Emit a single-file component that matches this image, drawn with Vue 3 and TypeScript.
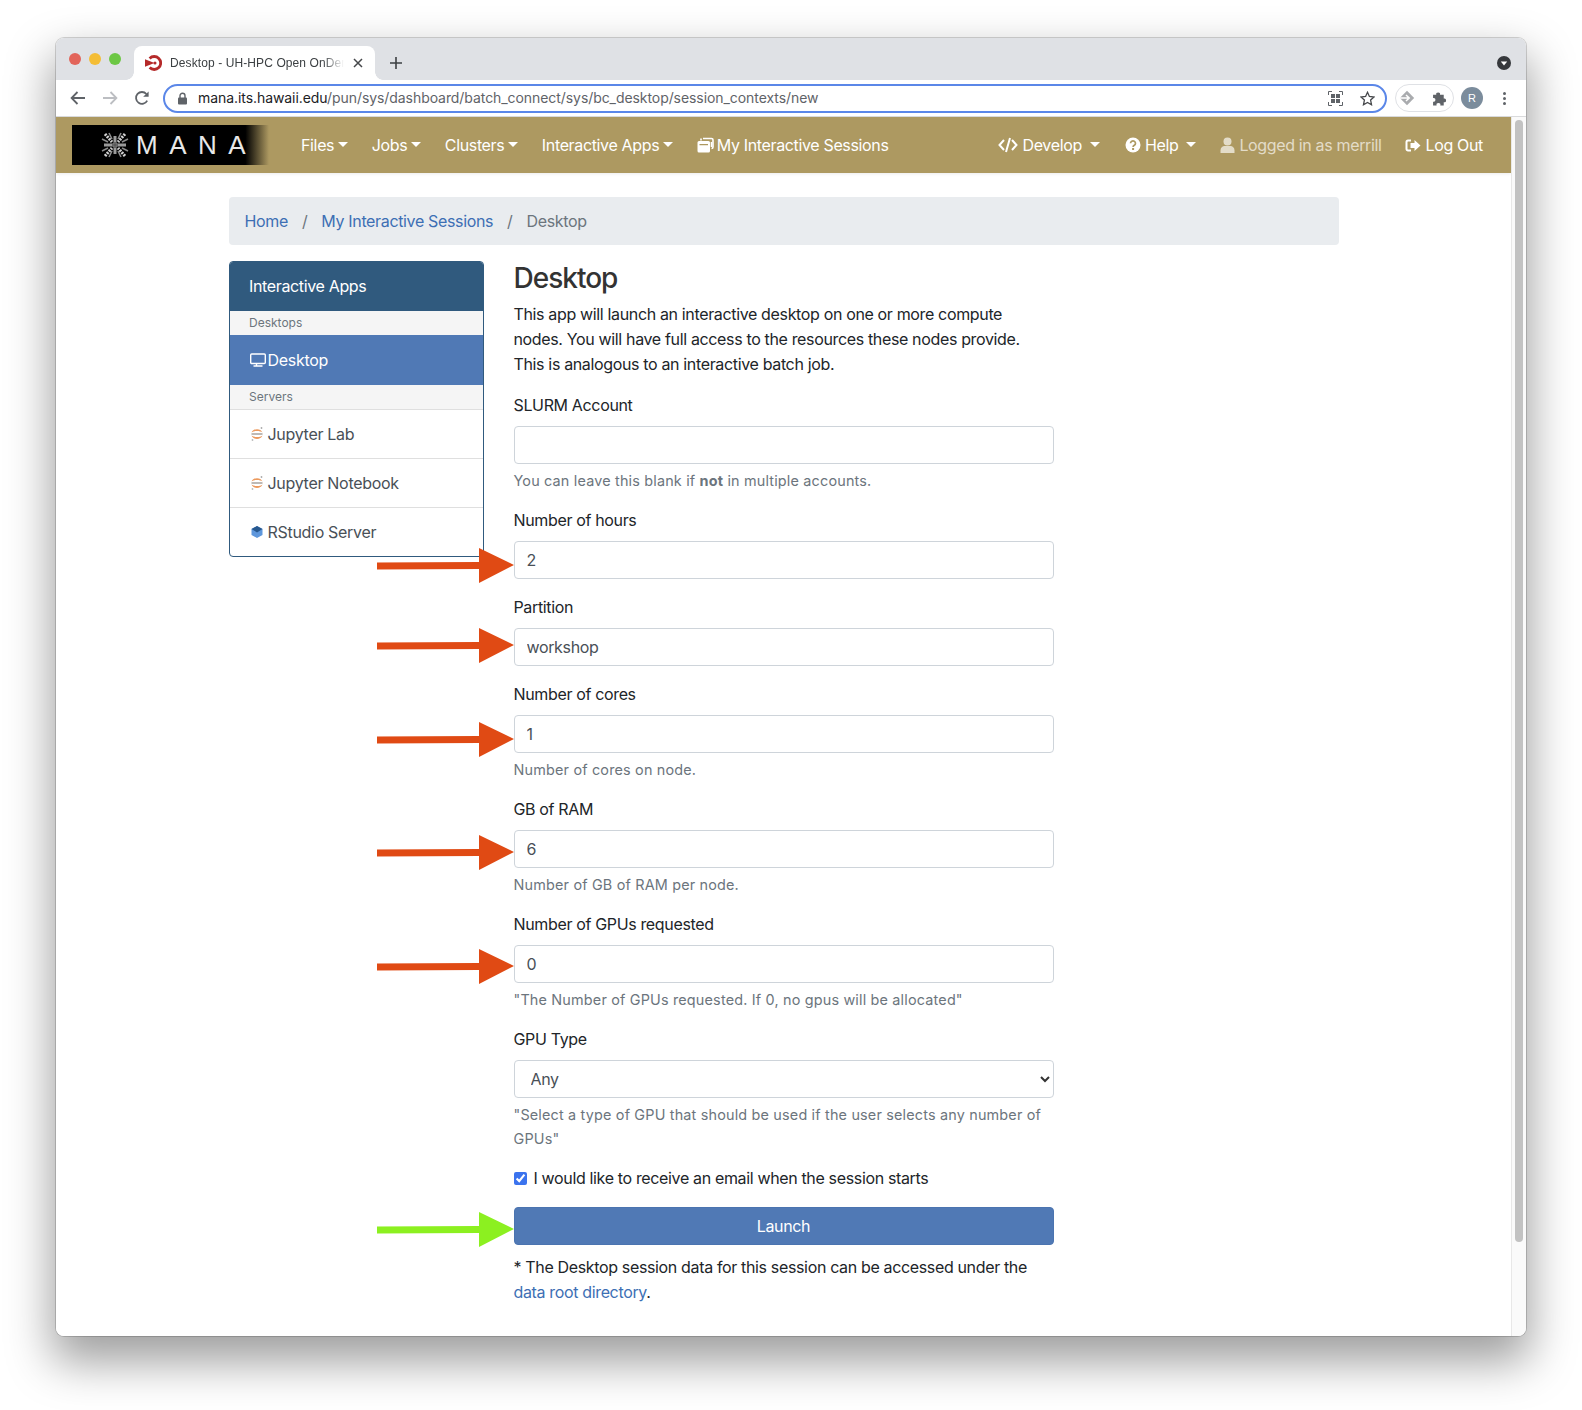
<script setup lang="ts">
interface Field { label: string; value: string; help?: string }
const fields: Field[] = [
  { label: 'Number of hours', value: '2' },
  { label: 'Partition', value: 'workshop' },
  { label: 'Number of cores', value: '1', help: 'Number of cores on node.' },
  { label: 'GB of RAM', value: '6', help: 'Number of GB of RAM per node.' },
  { label: 'Number of GPUs requested', value: '0', help: '"The Number of GPUs requested. If 0, no gpus will be allocated"' },
]
const arrows = [
  { top: 548, color: '#e04a14' },
  { top: 628, color: '#e04a14' },
  { top: 722, color: '#e04a14' },
  { top: 835, color: '#e04a14' },
  { top: 949, color: '#e04a14' },
  { top: 1212, color: '#8cf020' },
]
</script>

<template>
  <div class="window">
    <div class="tabstrip">
      <div class="lights"><i class="l r"></i><i class="l y"></i><i class="l g"></i></div>
      <div class="tab">
        <svg class="fav" width="17" height="16" viewBox="0 0 17 16"><path d="M4.600 3.400A6.500 6.500 0 1 1 4.600 12.600" fill="none" stroke="#b52a2a" stroke-width="2.800"/><path d="M0 4.200 L9.500 8 L0 11.800Z" fill="#b52a2a"/><circle cx="10" cy="8" r="1.500" fill="#b52a2a"/></svg>
        <span class="tab-title">Desktop - UH-HPC Open OnDemand</span>
        <svg class="tab-x" width="10" height="10" viewBox="0 0 10 10"><path d="M1 1l8 8M9 1l-8 8" stroke="#45474a" stroke-width="1.500"/></svg>
      </div>
      <svg class="plus" width="12" height="12" viewBox="0 0 12 12"><path d="M6 0v12M0 6h12" stroke="#3c4043" stroke-width="1.600"/></svg>
      <span class="spacer"></span>
      <svg class="strip-menu" width="14" height="14" viewBox="0 0 14 14"><circle cx="7" cy="7" r="7" fill="#36383c"/><path d="M3.800 5.400h6.400L7 9.400Z" fill="#fff"/></svg>
    </div>

    <div class="toolbar">
      <svg class="tb back" width="16" height="14" viewBox="0 0 16 14"><path d="M15 7H2M7.500 1 1.600 7l5.900 6" fill="none" stroke="#5f6368" stroke-width="1.800"/></svg>
      <svg class="tb fwd" width="16" height="14" viewBox="0 0 16 14"><path d="M1 7h13M8.500 1l5.900 6-5.900 6" fill="none" stroke="#bcbec2" stroke-width="1.800"/></svg>
      <svg class="tb reload" width="16" height="16" viewBox="0 0 16 16"><path d="M13.200 10.600A5.900 5.900 0 1 1 12.400 4" fill="none" stroke="#5f6368" stroke-width="1.800"/><path d="M14.600 1.400v5.400H9.200Z" fill="#5f6368"/></svg>
      <div class="omnibox">
        <svg width="11" height="13" viewBox="0 0 11 13"><path d="M3 6V3.800a2.500 2.500 0 0 1 5 0V6" fill="none" stroke="#5f6368" stroke-width="1.400"/><rect x="1" y="5.500" width="9" height="7" rx="1" fill="#5f6368"/></svg>
        <span class="url"><b>mana.its.hawaii.edu</b>/pun/sys/dashboard/batch_connect/sys/bc_desktop/session_contexts/new</span>
        <svg class="qr" width="15" height="15" viewBox="0 0 15 15"><path d="M.5 4V.5H4M11 .5h3.500V4M14.500 11v3.500H11M4 14.500H.5V11" fill="none" stroke="#5f6368"/><rect x="3" y="3" width="4" height="4" fill="#5f6368"/><rect x="8" y="3" width="4" height="4" fill="#5f6368"/><rect x="3" y="8" width="4" height="4" fill="#5f6368"/><rect x="8" y="8" width="4" height="4" fill="#5f6368"/></svg>
        <svg class="star" width="15" height="15" viewBox="0 0 15 15"><path d="M7.500 1.300 9.400 5.500 14 6l-3.400 3.100.9 4.600-4-2.300-4 2.300.9-4.600L1 6l4.600-.5Z" fill="none" stroke="#45474a" stroke-width="1.300"/></svg>
      </div>
      <div class="ext">
        <svg width="16" height="16" viewBox="0 0 16 16"><path d="M8 .8 15.200 8 8 15.200.8 8Z" fill="#a9abae"/><path d="M1 8h8M7 5l3.200 3L7 11" fill="none" stroke="#fff" stroke-width="1.500"/></svg>
        <svg width="16" height="16" viewBox="0 0 15 15"><path d="M1 4.500h3a1.800 1.800 0 1 1 3.500 0h3.500V8a1.800 1.800 0 1 1 0 3.500V14.500H7.800a1.800 1.800 0 1 0-3.500 0H1V11a1.800 1.800 0 1 0 0-3.500Z" fill="#5f6368"/></svg>
      </div>
      <span class="avatar">R</span>
      <span class="dots"><i></i><i></i><i></i></span>
    </div>

    <div class="viewport">
      <div class="page">
        <nav class="navbar">
          <div class="logo">
            <svg class="mark" width="32" height="30" viewBox="0 0 32 30">
              <g fill="none">
                <path d="M16 6v18M5 15h22" stroke="#9a9a9a" stroke-width="3"/>
                <path d="M13 15h6M16 12v6" stroke="#555" stroke-width="1.500"/>
                <path d="M6 4l7 8M26 4l-7 8M6 26l7-8M26 26l-7-8" stroke="#cfcfcf" stroke-width="3" stroke-dasharray="2 1"/>
                <path d="M10 3l3 6M22 3l-3 6M10 27l3-6M22 27l-3-6M3 9l6 3M29 9l-6 3M3 21l6-3M29 21l-6-3" stroke="#8a8a8a" stroke-width="1.600"/>
              </g>
            </svg>
            <span class="logo-text">MANA</span>
          </div>
          <a class="nl caret tight">Files</a>
          <a class="nl caret tight">Jobs</a>
          <a class="nl caret tight">Clusters</a>
          <a class="nl caret tight">Interactive Apps</a>
          <a class="nl">
            <svg class="ni win" width="17" height="16" viewBox="0 0 17 16"><path d="M6 1.500h8.500a1.500 1.500 0 0 1 1.500 1.500v7a1.500 1.500 0 0 1-1.500 1.500" fill="none" stroke="#fff" stroke-width="1.600"/><path d="M4 1.500v2M14.500 10V5" stroke="#fff" stroke-width="1.600"/><path d="M2 4h9.500A1.500 1.500 0 0 1 13 5.500v8.500a1.500 1.500 0 0 1-1.500 1.500H2A1.500 1.500 0 0 1 .5 14V5.500A1.500 1.500 0 0 1 2 4Zm.5 3v1.200h8.500V7Z" fill="#fff" fill-rule="evenodd"/></svg>
            My Interactive Sessions
          </a>
          <span class="spacer"></span>
          <a class="nl caret wide">
            <svg class="ni code" width="20" height="16" viewBox="0 0 20 16"><path d="M6 3 1.500 8 6 13M14 3l4.500 5L14 13M12 1 8 15" fill="none" stroke="#fff" stroke-width="2"/></svg>
            Develop
          </a>
          <a class="nl caret wide help">
            <svg class="ni" width="16" height="16" viewBox="0 0 16 16"><circle cx="8" cy="8" r="7.500" fill="#fff"/><path d="M5.500 6.200a2.500 2.400 0 1 1 3.800 2.100c-.8.500-1.200.8-1.200 1.700" fill="none" stroke="#ad9961" stroke-width="1.700"/><rect x="7.100" y="11" width="2" height="2" fill="#ad9961"/></svg>
            Help
          </a>
          <a class="nl muted">
            <svg class="ni" width="15" height="16" viewBox="0 0 15 16"><circle cx="7.500" cy="4.500" r="4" fill="#e3dcc8"/><path d="M.5 16v-2.500c0-3 2-4.500 4-4.500h6c2 0 4 1.500 4 4.500V16Z" fill="#e3dcc8"/></svg>
            Logged in as merrill
          </a>
          <a class="nl end">
            <svg class="ni out" width="16" height="15" viewBox="0 0 16 15"><path d="M6 2.500H3a1.500 1.500 0 0 0-1.500 1.500v7A1.500 1.500 0 0 0 3 12.500h3" fill="none" stroke="#fff" stroke-width="2"/><path d="M15.500 7.500 9.500 2v3H5.500v5h4v3Z" fill="#fff"/></svg>
            Log Out
          </a>
        </nav>

        <main class="container">
          <ol class="crumbs">
            <li><a>Home</a></li>
            <li class="sep">/</li>
            <li><a>My Interactive Sessions</a></li>
            <li class="sep">/</li>
            <li class="cur">Desktop</li>
          </ol>

          <div class="columns">
            <aside class="side">
              <div class="side-head">Interactive Apps</div>
              <div class="side-group">Desktops</div>
              <a class="side-item active">
                <svg class="si" width="16" height="14" viewBox="0 0 16 14"><rect x=".7" y="1" width="14.600" height="9.500" rx="1" fill="none" stroke="#fff" stroke-width="1.400"/><path d="M6.500 11v1.500M3.500 13h9" stroke="#fff" stroke-width="1.400"/></svg>Desktop
              </a>
              <div class="side-group">Servers</div>
              <a class="side-item">
                <svg class="si small" width="14" height="16" viewBox="0 0 14 16"><path d="M1.500 6.500C3 2 11 2 12.500 6.500 10 4.500 4 4.500 1.500 6.500Z" fill="#ec9a5e"/><path d="M1.500 9.500C3 14 11 14 12.500 9.500 10 11.500 4 11.500 1.500 9.500Z" fill="#ec9a5e"/><rect x="1.500" y="7" width="11" height="2" fill="#bdb9b5"/><circle cx="11.500" cy="2" r=".9" fill="#aaa"/><circle cx="2.500" cy="14" r=".9" fill="#bbb"/></svg>Jupyter Lab
              </a>
              <a class="side-item">
                <svg class="si small" width="14" height="16" viewBox="0 0 14 16"><path d="M1.500 6.500C3 2 11 2 12.500 6.500 10 4.500 4 4.500 1.500 6.500Z" fill="#ec9a5e"/><path d="M1.500 9.500C3 14 11 14 12.500 9.500 10 11.500 4 11.500 1.500 9.500Z" fill="#ec9a5e"/><rect x="1.500" y="7" width="11" height="2" fill="#bdb9b5"/><circle cx="11.500" cy="2" r=".9" fill="#aaa"/><circle cx="2.500" cy="14" r=".9" fill="#bbb"/></svg>Jupyter Notebook
              </a>
              <a class="side-item last">
                <svg class="si small" width="14" height="14" viewBox="0 0 14 14"><path d="M7 1l5.500 3v6L7 13 1.500 10V4Z" fill="#5e97dc"/><path d="M7 1l5.500 3L7 7.500 1.500 4Z" fill="#27588f"/></svg>RStudio Server
              </a>
            </aside>

            <section class="form">
              <h3>Desktop</h3>
              <p class="intro">This app will launch an interactive desktop on one or more compute nodes. You will have full access to the resources these nodes provide. This is analogous to an interactive batch job.</p>

              <div class="fg">
                <label>SLURM Account</label>
                <input class="ctl" type="text" value="" />
                <small>You can leave this blank if <strong>not</strong> in multiple accounts.</small>
              </div>
              <div class="fg" v-for="f in fields" :key="f.label">
                <label>{{ f.label }}</label>
                <input class="ctl" type="text" :value="f.value" />
                <small v-if="f.help">{{ f.help }}</small>
              </div>
              <div class="fg">
                <label>GPU Type</label>
                <div class="sel-wrap">
                  <select class="ctl sel"><option>Any</option></select>
                  <svg class="chev" width="10" height="7" viewBox="0 0 10 7"><path d="M1 1l4 4 4-4" fill="none" stroke="#333" stroke-width="2"/></svg>
                </div>
                <small>"Select a type of GPU that should be used if the user selects any number of GPUs"</small>
              </div>
              <div class="check">
                <input type="checkbox" checked />
                <span>I would like to receive an email when the session starts</span>
              </div>
              <button class="launch" type="button">Launch</button>
              <p class="note">* The Desktop session data for this session can be accessed under the <a>data root directory</a>.</p>
            </section>
          </div>
        </main>
      </div>
      <div class="scrollbar"><i></i></div>
    </div>

    <svg v-for="a in arrows" :key="a.top" class="arrow" :style="{ top: a.top - 38 + 'px' }" width="137" height="36" viewBox="0 0 137 36">
      <path d="M0 14.500 102 14v-14L137 17 102 35V21L0 21.500Z" :fill="a.color" />
    </svg>
  </div>
</template>

<style>
html, body { margin: 0; padding: 0; background: #fff; }
</style>

<style scoped>
.window {
  position: relative;
  box-sizing: border-box;
  width: 1470px;
  height: 1298px;
  margin: 38px 0 74px 56px;
  border-radius: 8px;
  overflow: visible;
  background: #fff;
  box-shadow: 0 0 0 1px rgba(0,0,0,.16), 0 22px 46px 4px rgba(0,0,0,.38);
  display: flex;
  flex-direction: column;
  font-family: Inter, "Noto Sans", sans-serif;
  color: #333;
}
.tabstrip {
  height: 42px;
  background: #dfe1e5;
  border-radius: 8px 8px 0 0;
  display: flex;
  align-items: flex-end;
  flex: none;
}
.lights { display: flex; gap: 8px; padding: 0 0 15px 13px; width: 65px; box-sizing: border-box; align-self: flex-end; }
.l { width: 12px; height: 12px; border-radius: 50%; display: block; }
.l.r { background: #e2645a; }
.l.y { background: #f4bd35; }
.l.g { background: #6cc744; }
.tab {
  position: relative;
  margin-left: 13px;
  width: 241px;
  height: 34px;
  background: #fff;
  border-radius: 8px 8px 0 0;
  display: flex;
  align-items: center;
  box-sizing: border-box;
  padding-left: 11px;
}
.tab::before, .tab::after {
  content: "";
  position: absolute;
  bottom: 0;
  width: 8px;
  height: 8px;
  background: radial-gradient(circle at 0 0, #dfe1e5 7.500px, #fff 8px);
}
.tab::before { left: -8px; }
.tab::after { right: -8px; background: radial-gradient(circle at 100% 0, #dfe1e5 7.500px, #fff 8px); }
.tab-title {
  font: 12px "Liberation Sans", sans-serif;
  letter-spacing: .1px;
  color: #3c4043;
  margin-left: 8px;
  width: 174px;
  white-space: nowrap;
  overflow: hidden;
  -webkit-mask-image: linear-gradient(90deg, #000 88%, transparent);
  mask-image: linear-gradient(90deg, #000 88%, transparent);
}
.tab-x { margin-left: 9px; }
.plus { margin: 0 0 11px 15px; }
.spacer { flex: 1; }
.strip-menu { margin: 0 15px 10px 0; }
.toolbar {
  height: 37px;
  flex: none;
  display: flex;
  align-items: center;
  background: #fff;
  border-bottom: 1px solid #d9dadc;
  box-sizing: border-box;
}
.tb { flex: none; }
.back { margin-left: 14px; }
.fwd { margin-left: 16px; }
.reload { margin-left: 16px; }
.omnibox {
  margin-left: 13px;
  width: 1224px;
  height: 29px;
  border: 2px solid #5b87e8;
  border-radius: 15px;
  box-sizing: border-box;
  display: flex;
  align-items: center;
  padding-left: 12px;
  flex: none;
}
.url {
  font: 14px Inter, sans-serif;
  letter-spacing: -.07px;
  color: #5f6368;
  margin-left: 10px;
  padding-bottom: 1px;
  white-space: nowrap;
}
.url b { font-weight: 400; color: #202124; }
.qr { margin-left: auto; }
.star { margin: 0 10px 0 17px; }
.ext {
  margin-left: 8px;
  width: 59px;
  height: 28px;
  border: 1px solid #dfe1e5;
  border-radius: 14px;
  box-sizing: border-box;
  display: flex;
  align-items: center;
  justify-content: space-between;
  padding: 0 5px 0 3px;
  flex: none;
}
.avatar {
  margin-left: 7px;
  width: 22px;
  height: 22px;
  border-radius: 50%;
  background: #7b8c9c;
  color: #fff;
  font: 11px "Liberation Sans", sans-serif;
  display: flex;
  align-items: center;
  justify-content: center;
  flex: none;
}
.dots { display: flex; flex-direction: column; gap: 2px; margin-left: 20px; }
.dots i { display: block; width: 3px; height: 3px; border-radius: 50%; background: #5f6368; }

.viewport { flex: 1; display: flex; min-height: 0; border-radius: 0 0 8px 8px; overflow: hidden; }
.page { flex: 1; min-width: 0; background: #fff; }
.scrollbar { width: 15px; flex: none; background: #fafafa; border-left: 1px solid #e8e8e8; box-sizing: border-box; padding: 3px 3px 0; }
.scrollbar i { display: block; width: 8px; height: 1122px; border-radius: 4px; background: #c2c2c2; }

.navbar {
  height: 56px;
  background: #ad9961;
  display: flex;
  align-items: center;
  padding: 0 16px;
  box-sizing: border-box;
  box-shadow: 0 1px 3px rgba(0,0,0,.08);
}
.logo {
  width: 197px;
  height: 40px;
  background: linear-gradient(90deg, #000 88%, #ad9961 100%);
  display: flex;
  align-items: center;
  margin-right: 32px;
  padding-left: 27px;
  box-sizing: border-box;
  flex: none;
}
.logo-text {
  font: 400 26px "Liberation Sans", sans-serif;
  color: #e8e8e8;
  letter-spacing: 11.500px;
  margin-left: 5px;
}
.nl {
  color: #fff;
  font-size: 16px;
  padding: 0 12px 0 0;
  margin-right: 13px;
  white-space: nowrap;
  display: flex;
  align-items: center;
  letter-spacing: -.35px;
}
.nl.tight { margin-right: 11.500px; }
.nl.help { margin-right: 12px; }
.nl.end { margin-right: 0; padding-right: 12px; }
.muted { color: #e3dcc8; margin-right: 11px; }
.caret::after {
  content: "";
  display: block;
  width: 0;
  height: 0;
  margin-left: 4px;
  border-left: 5px solid transparent;
  border-right: 5px solid transparent;
  border-top: 5px solid #fff;
  transform: translateY(-1px);
}
.caret.wide::after { margin-left: 8px; }
.ni { margin-right: 4px; flex: none; }
.ni.win { margin-right: 3px; }
.ni.code { margin-right: 5px; }
.ni.out { margin-right: 5px; }

.container { width: 1110px; margin: 0 auto; padding-top: 24px; }
.crumbs {
  list-style: none;
  margin: 0 0 16px;
  padding: 12px 16px;
  height: 48px;
  box-sizing: border-box;
  background: #e9ecef;
  border-radius: 4px;
  display: flex;
  font-size: 16px;
  line-height: 24px;
  letter-spacing: -.35px;
}
.crumbs a { color: #3d6fb4; }
.crumbs .sep { color: #6c757d; padding: 0 14px; }
.crumbs .cur { color: #6c757d; }

.columns { display: flex; align-items: flex-start; gap: 30px; }
.side {
  width: 255px;
  flex: none;
  border: 1px solid #305a7e;
  border-radius: 4px;
  box-sizing: border-box;
  overflow: hidden;
}
.side-head {
  height: 49px;
  box-sizing: border-box;
  padding: 0 0 2px 19.500px;
  background: #305a7e;
  color: #fff;
  display: flex;
  align-items: center;
  font-size: 16px;
  letter-spacing: -.35px;
}
.side-group {
  height: 25px;
  box-sizing: border-box;
  background: #f5f5f5;
  color: #6c757d;
  font-size: 12px;
  line-height: 24px;
  padding-left: 19.500px;
  border-bottom: 1px solid #dfdfdf;
}
.side-group:has(+ .active) { border-bottom: 0; height: 24px; }
.side-item {
  height: 49px;
  box-sizing: border-box;
  display: flex;
  align-items: center;
  padding-left: 20px;
  font-size: 16px;
  color: #495057;
  border-bottom: 1px solid #dfdfdf;
  letter-spacing: -.3px;
}
.side-item.active { background: #5079b5; color: #fff; height: 50px; border-bottom: 0; }
.side-item.last { border-bottom: 0; height: 48px; }
.si { margin-right: 2px; flex: none; }
.si.small { margin-right: 4px; }

.form { width: 540px; flex: none; font-size: 16px; line-height: 24px; letter-spacing: -.35px; color: #212529; }
h3 { font-size: 28px; line-height: 34px; font-weight: 500; margin: 0 0 7px; color: #333; letter-spacing: -1px; }
.intro { margin: 0 0 16px; line-height: 25px; color: #212529; }
.fg { margin-bottom: 16px; }
.fg label { display: block; margin-bottom: 9px; line-height: 24px; }
.ctl {
  display: block;
  width: 100%;
  height: 38px;
  box-sizing: border-box;
  border: 1px solid #ced4da;
  border-radius: 4px;
  padding: 6px 12px;
  font: inherit;
  color: #495057;
  background: #fff;
  outline: none;
  letter-spacing: inherit;
}
.sel-wrap { position: relative; }
.sel { appearance: none; -webkit-appearance: none; padding-left: 16px; }
.chev { position: absolute; right: 4px; top: 16px; pointer-events: none; }
small {
  display: block;
  margin-top: 5px;
  margin-bottom: -1px;
  font-size: 14.400px;
  line-height: 24px;
  color: #6c757d;
  letter-spacing: .18px;
}
small strong { font-weight: 700; }
.check { display: flex; align-items: center; height: 24px; margin-bottom: 17px; }
.check input { width: 13px; height: 13px; margin: 0 7px 0 0; accent-color: #3b73ee; }
.launch {
  display: block;
  width: 100%;
  height: 38px;
  border: 1px solid #4b74b0;
  border-radius: 4px;
  background: #5079b5;
  color: #fff;
  font: inherit;
  letter-spacing: inherit;
  padding: 0;
}
.note { margin: 10px 0 0; line-height: 25px; color: #212529; }
.note a { color: #3d6fb4; }
.arrow { position: absolute; left: 321px; z-index: 2; }
</style>
